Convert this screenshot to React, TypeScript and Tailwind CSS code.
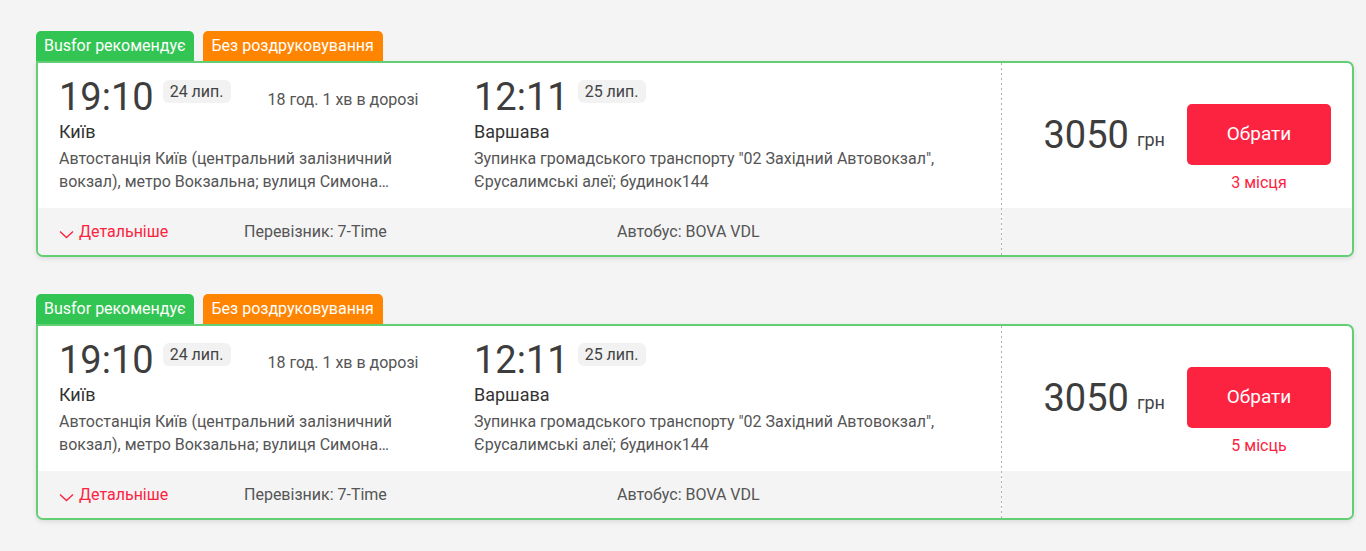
import React from "react";

type Trip = {
  depTime: string;
  depDate: string;
  duration: string;
  depCity: string;
  depAddress: string;
  arrTime: string;
  arrDate: string;
  arrCity: string;
  arrAddress: string;
  carrier: string;
  bus: string;
  price: string;
  seats: string;
};

const trips: Trip[] = [
  {
    depTime: "19:10",
    depDate: "24 лип.",
    duration: "18 год. 1 хв в дорозі",
    depCity: "Київ",
    depAddress:
      "Автостанція Київ (центральний залізничний вокзал), метро Вокзальна; вулиця Симона Петлюри, 32",
    arrTime: "12:11",
    arrDate: "25 лип.",
    arrCity: "Варшава",
    arrAddress:
      'Зупинка громадського транспорту "02 Західний Автовокзал", Єрусалимські алеї; будинок144',
    carrier: "7-Time",
    bus: "BOVA VDL",
    price: "3050",
    seats: "3 місця",
  },
  {
    depTime: "19:10",
    depDate: "24 лип.",
    duration: "18 год. 1 хв в дорозі",
    depCity: "Київ",
    depAddress:
      "Автостанція Київ (центральний залізничний вокзал), метро Вокзальна; вулиця Симона Петлюри, 32",
    arrTime: "12:11",
    arrDate: "25 лип.",
    arrCity: "Варшава",
    arrAddress:
      'Зупинка громадського транспорту "02 Західний Автовокзал", Єрусалимські алеї; будинок144',
    carrier: "7-Time",
    bus: "BOVA VDL",
    price: "3050",
    seats: "5 місць",
  },
];

function Chevron() {
  return (
    <svg width="15" height="9" viewBox="0 0 15 9" fill="none" className="mt-[6px]">
      <path d="M1 1.5 L7.5 7.5 L14 1.5" stroke="#fc2340" strokeWidth="1.4" />
    </svg>
  );
}

function TimeRow({ time, date, extra }: { time: string; date: string; extra?: string }) {
  return (
    <div className="flex items-start">
      <span className="mt-[2px] text-[38px] leading-[38px] text-[#3d3d3d]">{time}</span>
      <span className="ml-[9px] mt-[4px] rounded-[6px] bg-[#f2f2f2] px-[7px] text-[16px] leading-[23px] text-[#444]">
        {date}
      </span>
      {extra && (
        <span className="ml-[37px] mt-[13px] text-[16px] leading-[22px] text-[#555]">{extra}</span>
      )}
    </div>
  );
}

function TripCard({ trip }: { trip: Trip }) {
  return (
    <div>
      <div className="flex gap-[9px]">
        <span className="rounded-t-[5px] bg-[#33c553] px-[8px] text-[16px] leading-[30px] text-white">
          Busfor рекомендує
        </span>
        <span className="rounded-t-[5px] bg-[#ff8400] px-[9px] text-[16px] leading-[30px] text-white">
          Без роздруковування
        </span>
      </div>
      <div className="flex overflow-hidden rounded-b-[7px] rounded-tr-[7px] border-2 border-[#62cf74] bg-white shadow-[0_2px_5px_rgba(0,0,0,0.1)]">
        <div className="flex flex-1 flex-col">
          <div className="flex h-[145px] pl-[21px] pt-[13px]">
            <div className="w-[415px]">
              <TimeRow time={trip.depTime} date={trip.depDate} extra={trip.duration} />
              <div className="mt-[4px] text-[18px] leading-[24px] text-[#333]">{trip.depCity}</div>
              <div className="mt-[3px] line-clamp-2 w-[340px] text-[16px] leading-[23px] text-[#555]">
                {trip.depAddress}
              </div>
            </div>
            <div className="flex-1 pr-[20px]">
              <TimeRow time={trip.arrTime} date={trip.arrDate} />
              <div className="mt-[4px] text-[18px] leading-[24px] text-[#333]">{trip.arrCity}</div>
              <div className="mt-[3px] line-clamp-2 text-[16px] leading-[23px] text-[#555]">
                {trip.arrAddress}
              </div>
            </div>
          </div>
          <div className="flex h-[47px] items-center bg-[#f4f4f4] pl-[21px] text-[16px] text-[#555]">
            <div className="flex w-[185px] items-center gap-[5px] text-[#fc2340]">
              <Chevron />
              <span>Детальніше</span>
            </div>
            <div className="w-[373px]">Перевізник: {trip.carrier}</div>
            <div>Автобус: {trip.bus}</div>
          </div>
        </div>
        <div className="w-px bg-[repeating-linear-gradient(to_bottom,#b0b0b0_0_2px,transparent_2px_5px)]" />
        <div className="flex w-[350px] flex-col">
          <div className="flex h-[145px] items-start justify-end gap-[22px] pr-[21px] pt-[41px]">
            <div className="flex h-[61px] items-center text-[#3d3d3d]">
              <span className="text-[38px] leading-[40px]">{trip.price}</span>
              <span className="ml-[8px] mt-[10px] text-[18px] leading-[24px] text-[#444]">грн</span>
            </div>
            <div className="flex w-[144px] flex-col items-center">
              <button className="h-[61px] w-[144px] rounded-[5px] bg-[#fc2340] text-[19px] text-white">
                Обрати
              </button>
              <span className="mt-[6px] text-[16px] leading-[24px] text-[#fc2340]">{trip.seats}</span>
            </div>
          </div>
          <div className="h-[47px] bg-[#f4f4f4]" />
        </div>
      </div>
    </div>
  );
}

export default function App() {
  return (
    <div
      className="min-h-[551px] bg-[#f4f4f4] pl-[36px] pt-[31px]"
      style={{ fontFamily: "Roboto, 'Noto Sans', sans-serif" }}
    >
      <div className="flex w-[1318px] flex-col gap-[37px]">
        {trips.map((t, i) => (
          <TripCard key={i} trip={t} />
        ))}
      </div>
    </div>
  );
}
